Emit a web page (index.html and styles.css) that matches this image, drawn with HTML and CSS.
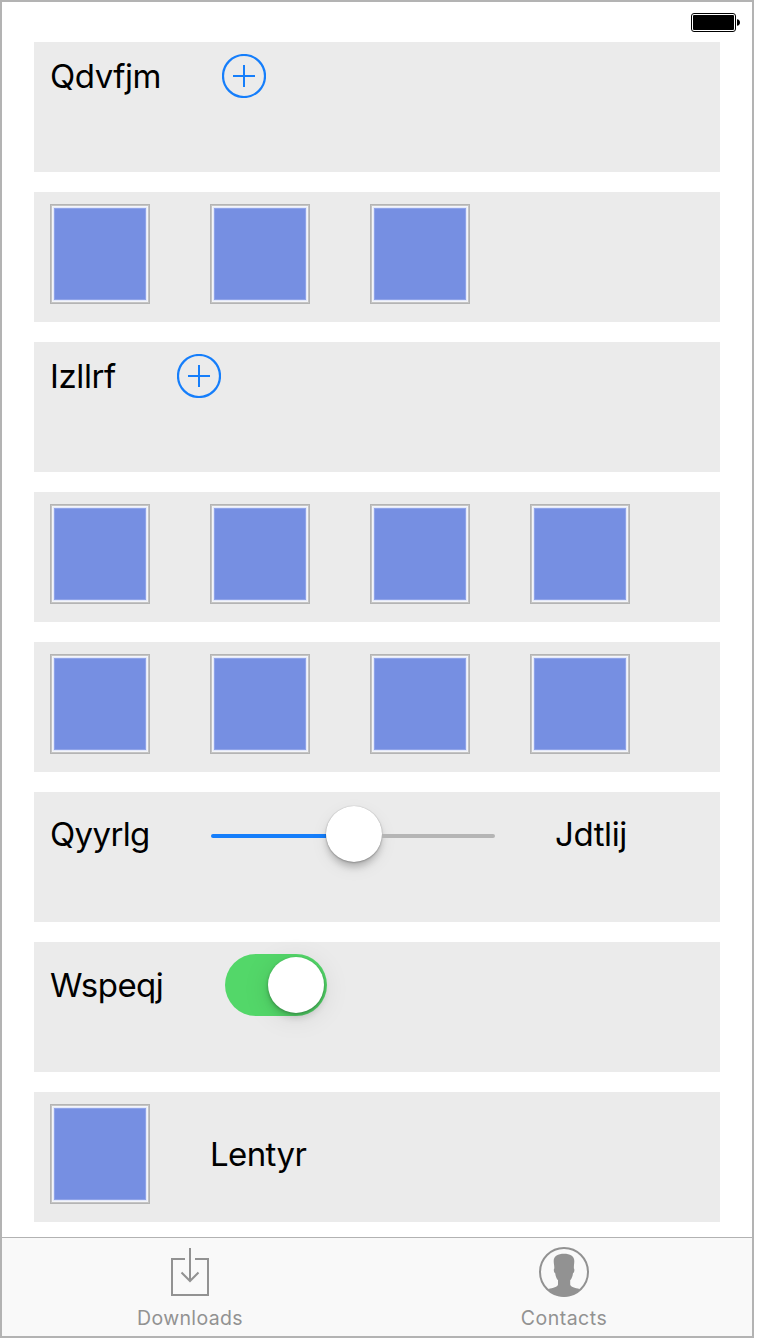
FILE: index.html
```html
<!DOCTYPE html>
<html lang="en">
<head>
<meta charset="utf-8">
<title>Controls</title>
<link rel="stylesheet" href="styles.css">
</head>
<body>
<div class="screen">
  <header class="status">
    <svg class="battery" width="50" height="20" viewBox="0 0 50 20">
      <rect x=".5" y=".5" width="44" height="18" rx="2.5" fill="#fff" stroke="#000"/>
      <rect x="2" y="2" width="41" height="15" rx="1" fill="#000"/>
      <path d="M46 6.2c1.800 0 3 1.400 3 3.300s-1.200 3.300-3 3.300z"/>
    </svg>
  </header>
  <main class="rows">
    <section class="row">
      <span class="label qdvfjm">Qdvfjm</span>
      <svg class="add" width="44" height="44" viewBox="0 0 44 44"><circle cx="22" cy="22" r="21"/><path d="M22 11v22M11 22h22"/></svg>
    </section>
    <section class="row"><i class="tile"></i><i class="tile"></i><i class="tile"></i></section>
    <section class="row">
      <span class="label izllrf">Izllrf</span>
      <svg class="add" width="44" height="44" viewBox="0 0 44 44"><circle cx="22" cy="22" r="21"/><path d="M22 11v22M11 22h22"/></svg>
    </section>
    <section class="row"><i class="tile"></i><i class="tile"></i><i class="tile"></i><i class="tile"></i></section>
    <section class="row"><i class="tile"></i><i class="tile"></i><i class="tile"></i><i class="tile"></i></section>
    <section class="row">
      <span class="label qyyrlg">Qyyrlg</span>
      <div class="slider"><i class="fill"></i><i class="thumb"></i><i class="rest"></i></div>
      <span class="label jdtlij">Jdtlij</span>
    </section>
    <section class="row">
      <span class="label wspeqj">Wspeqj</span>
      <div class="switch"><i class="knob"></i></div>
    </section>
    <section class="row"><i class="tile"></i><span class="label lentyr">Lentyr</span></section>
  </main>
  <nav class="tabs">
    <div class="tab">
      <svg width="52" height="52" viewBox="0 0 52 52" fill="none" stroke="#929292" stroke-width="2">
        <path d="M21 13H8v36h36V13H31M26 2v33M17.500 26.500l8.500 8.500 8.500-8.500"/>
      </svg>
      <span class="tab-name downloads">Downloads</span>
    </div>
    <div class="tab">
      <svg width="52" height="52" viewBox="0 0 52 52">
        <circle cx="26" cy="26" r="24" fill="none" stroke="#929292" stroke-width="2"/>
        <path fill="#929292" d="M26 7.800c6 0 10.300 2.400 10.300 7.200 0 2.800-.5 4.500-.4 7.500.9.600.5 4.300-.9 4.800-.4 3.200-1.300 5.300-2.800 7v4.200c0 2.500 5 3.500 9.300 4.500C38 48 32 50.500 26 50.500S14 48 10.500 43c4.300-1 9.500-2 9.500-4.500v-4.200c-1.500-1.700-2.400-3.800-2.800-7-1.400-.5-1.800-4.200-.9-4.800.1-3-.6-4.700-.6-7.500C15.700 10.200 20 7.800 26 7.800z"/>
      </svg>
      <span class="tab-name contacts">Contacts</span>
    </div>
  </nav>
</div>
</body>
</html>
```

FILE: styles.css
```css
* { box-sizing: border-box; }
body { margin: 0; background: #fff; font-family: Inter, "Liberation Sans", sans-serif; }
.screen { width: 754px; height: 1338px; border: 2px solid #b3b3b3; display: flex; flex-direction: column; background: #fff; }
.status { height: 40px; flex: none; display: flex; justify-content: flex-end; padding: 11px 11px 0 0; }
.battery { display: block; }
.rows { flex: 1; display: flex; flex-direction: column; gap: 20px; padding: 0 32px; }
.row { height: 130px; flex: none; display: flex; flex-wrap: wrap; align-items: center; align-content: flex-start; gap: 60px; padding: 12px 16px; background: #ebebeb; }
.label { font-size: 33px; line-height: 44px; color: #000; white-space: nowrap; }
.qdvfjm { width: 112px; letter-spacing: -.45px; }
.izllrf { width: 67px; letter-spacing: -.4px; }
.qyyrlg { width: 101px; letter-spacing: -.65px; }
.jdtlij { width: 73px; letter-spacing: -.4px; }
.wspeqj { width: 115px; letter-spacing: -.55px; }
.lentyr { width: 97px; letter-spacing: -.6px; }
.add { display: block; fill: none; stroke: #157efb; stroke-width: 2; }
.add circle { stroke-width: 2.2; }
.tile { width: 100px; height: 100px; border: 1px solid #b4b4b4; background: #768fe2; box-shadow: inset 0 0 0 1px #c4c4c4, inset 0 0 0 2px #f4f5f8, inset 0 0 0 3px #e3e8fb, inset 0 0 0 4px #8fa3e8; }
.slider { width: 284px; height: 60px; display: flex; align-items: center; }
.fill, .rest { height: 4px; margin-top: 4px; }
.fill { width: 115px; background: #157efb; border-radius: 2px 0 0 2px; }
.rest { width: 113px; background: #b5b5b5; border-radius: 0 2px 2px 0; }
.thumb, .knob { width: 56px; height: 56px; border-radius: 50%; background: #fff; }
.thumb { box-shadow: 0 0 1px rgba(0,0,0,.3), 0 1px 2px rgba(0,0,0,.2), 0 6px 7px -1px rgba(0,0,0,.2), 0 6px 18px rgba(0,0,0,.07); }
.switch { width: 102px; height: 62px; padding: 3px; display: flex; justify-content: flex-end; border-radius: 31px; background: #53d769; }
.knob { box-shadow: 0 1px 3px rgba(0,0,0,.25), 0 5px 7px rgba(0,0,0,.13), 0 4px 28px rgba(0,0,0,.1); }
.tabs { height: 99px; flex: none; display: grid; grid-template-columns: 376px 372px; border-top: 1px solid #b2b2b2; background: #f9f9f9; }
.tab { display: flex; flex-direction: column; align-items: center; padding-top: 8px; }
.tab-name { margin-top: 8px; font-size: 19.500px; line-height: 24px; color: #929292; white-space: nowrap; }
.downloads { letter-spacing: .35px; }
.contacts { letter-spacing: .5px; }
```
